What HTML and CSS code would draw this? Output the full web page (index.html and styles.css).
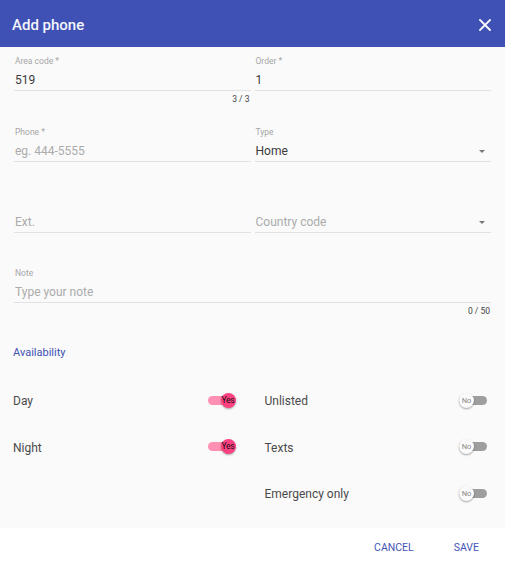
FILE: index.html
```html
<!DOCTYPE html>
<html>
<head>
<meta charset="utf-8">
<link rel="stylesheet" href="styles.css">
</head>
<body>
<div class="dialog">
  <header class="header">
    <h1 class="title">Add phone</h1>
    <button class="close" aria-label="Close">
      <svg width="12" height="12" viewBox="0 0 12 12"><path d="M1 1L11 11M11 1L1 11" stroke="#fff" stroke-width="1.8" stroke-linecap="square"/></svg>
    </button>
  </header>
  <main class="body">
    <div class="row">
      <div class="field">
        <div class="label">Area code *</div>
        <div class="input value">519</div>
        <div class="hint">3 / 3</div>
      </div>
      <div class="field">
        <div class="label">Order *</div>
        <div class="input value">1</div>
      </div>
    </div>
    <div class="row">
      <div class="field">
        <div class="label">Phone *</div>
        <div class="input placeholder">eg. 444-5555</div>
      </div>
      <div class="field">
        <div class="label">Type</div>
        <div class="input value select">Home<span class="arrow"></span></div>
      </div>
    </div>
    <div class="row row-short">
      <div class="field">
        <div class="label"></div>
        <div class="input placeholder">Ext.</div>
      </div>
      <div class="field">
        <div class="label"></div>
        <div class="input placeholder select">Country code<span class="arrow"></span></div>
      </div>
    </div>
    <div class="row-full">
      <div class="field">
        <div class="label">Note</div>
        <div class="input placeholder">Type your note</div>
        <div class="hint">0 / 50</div>
      </div>
    </div>
    <div class="section">Availability</div>
    <div class="toggles">
      <div class="toggle-row"><span class="tlabel">Day</span><span class="switch on"><span class="track"></span><span class="thumb">Yes</span></span></div>
      <div class="toggle-row"><span class="tlabel">Unlisted</span><span class="switch"><span class="track"></span><span class="thumb">No</span></span></div>
      <div class="toggle-row"><span class="tlabel">Night</span><span class="switch on"><span class="track"></span><span class="thumb">Yes</span></span></div>
      <div class="toggle-row"><span class="tlabel">Texts</span><span class="switch"><span class="track"></span><span class="thumb">No</span></span></div>
      <div class="toggle-row"></div>
      <div class="toggle-row"><span class="tlabel">Emergency only</span><span class="switch"><span class="track"></span><span class="thumb">No</span></span></div>
    </div>
  </main>
  <footer class="footer">
    <button class="btn">CANCEL</button>
    <button class="btn">SAVE</button>
  </footer>
</div>
</body>
</html>
```
FILE: styles.css
```css
* { box-sizing: border-box; }
html, body { margin: 0; padding: 0; background: #fafafa; }
body { font-family: Roboto, "Liberation Sans", sans-serif; }
.dialog { width: 505px; height: 568px; display: flex; flex-direction: column; background: #fafafa; }
.header { height: 47px; flex: none; background: #3f51b5; display: flex; align-items: center; justify-content: space-between; padding: 2px 14px 0 12px; }
.title { margin: 0; font-size: 15px; font-weight: 500; color: #f4f5fb; line-height: 20px; }
.close { background: none; border: 0; padding: 0; width: 12px; height: 12px; display: flex; cursor: pointer; }
.body { flex: 1; padding: 8px 0 0 0; }
.row { display: grid; grid-template-columns: 1fr 1fr; column-gap: 4px; padding: 0 14px; height: 71px; }
.row.row-short { height: 70px; }
.row-full { padding: 0 14px; height: 48px; }
.field { display: flex; flex-direction: column; }
.label { height: 12px; font-size: 8.5px; line-height: 12px; color: #a6a6a6; padding-left: 1px; }
.input { margin-top: 4px; height: 20px; font-size: 12px; line-height: 18px; padding: 0 0 1px 1px; border-bottom: 1px solid #e2e2e2; position: relative; }
.value { color: #3a3a3a; }
.placeholder { color: #ababab; }
.arrow { position: absolute; right: 6px; top: 8px; width: 0; height: 0; border-left: 3px solid transparent; border-right: 3px solid transparent; border-top: 3px solid #777; }
.hint { text-align: right; font-size: 8.5px; line-height: 12px; color: #444; padding-right: 1px; margin-top: 2px; }
.section { padding-left: 13px; margin-top: 30px; font-size: 11px; line-height: 16px; color: #3f51b5; }
.toggles { display: grid; grid-template-columns: 1fr 1fr; column-gap: 29px; padding: 0 18px 0 13px; margin-top: 17px; }
.toggle-row { height: 46.5px; display: flex; align-items: center; justify-content: space-between; }
.tlabel { font-size: 12px; color: #4a4a4a; }
.switch { position: relative; width: 28px; height: 15px; margin-top: -2px; }
.track { position: absolute; left: 0; right: 0; top: 3px; height: 9px; border-radius: 5px; background: #9e9e9e; }
.thumb { position: absolute; top: 0; left: 0; width: 15px; height: 15px; border-radius: 50%; background: #fafafa; box-shadow: 0 1px 2px rgba(0,0,0,0.35); font-size: 7.5px; line-height: 15px; text-align: center; color: #888; }
.switch.on .track { background: #ff8fb3; right: 2px; }
.switch.on .thumb { left: auto; right: 0; background: #ff4081; color: #111; font-size: 8.5px; letter-spacing: -0.3px; }
.footer { height: 40px; flex: none; background: #fff; display: flex; justify-content: flex-end; align-items: center; gap: 40px; padding-right: 26px; }
.btn { background: none; border: 0; padding: 0; font-family: Roboto, "Liberation Sans", sans-serif; font-size: 10.5px; color: #4655b8; line-height: 16px; cursor: pointer; }
```
